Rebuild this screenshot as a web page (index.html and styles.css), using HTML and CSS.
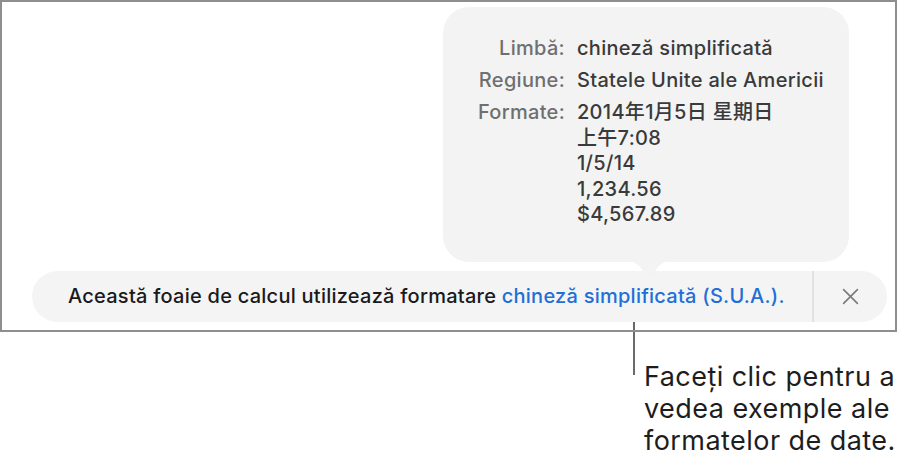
FILE: index.html
```html
<!DOCTYPE html>
<html lang="ro">

<head>
    <meta charset="UTF-8">
    <meta name="viewport" content="width=device-width, initial-scale=1.0">
    <title>Formatare</title>
    <link rel="stylesheet" href="styles.css">
</head>

<body>
    <div class="sheet-frame">
        <!-- popover with the locale details -->
        <div class="locale-popover">
            <div class="locale-grid">
                <div class="locale-label">Limbă:</div>
                <div class="locale-value">chineză simplificată</div>
                <div class="locale-label">Regiune:</div>
                <div class="locale-value">Statele Unite ale Americii</div>
                <div class="locale-label">Formate:</div>
                <div class="locale-value">
                    2014年1月5日 星期日<br>
                    上午7:08<br>
                    1/5/14<br>
                    1,234.56<br>
                    $4,567.89
                </div>
            </div>
            <svg class="popover-arrow" width="48" height="19" viewBox="0 0 48 19">
                <path d="M0 0 C10 0 14 3 19 12 C21.5 17 26.5 17 29 12 C34 3 38 0 48 0 Z" fill="#f3f3f3" />
            </svg>
        </div>

        <div class="format-banner">
            <p class="banner-text">Această foaie de calcul utilizează formatare <a href="#" class="banner-link">chineză simplificată (S.U.A.).</a></p>
            <button class="banner-close" type="button" aria-label="Închide">
                <svg width="17" height="17" viewBox="0 0 16 16">
                    <path d="M1.5 1.5 L14.5 14.5 M14.5 1.5 L1.5 14.5" stroke="#7a7a7a" stroke-width="1.5" stroke-linecap="round" fill="none" />
                </svg>
            </button>
        </div>
    </div>

    <div class="callout">
        <div class="callout-line"></div>
        <p class="callout-text">Faceți clic pentru a<br>vedea exemple ale<br>formatelor de date.</p>
    </div>
</body>

</html>
```

FILE: styles.css
```css
body {
    margin: 0;
    background: white;
    font-family: Inter, "Noto Sans CJK SC", sans-serif;
    color: #1d1d1d;
}

.sheet-frame {
    position: relative;
    width: 897px;
    height: 332px;
    box-sizing: border-box;
    border: 2px solid #8e8e8e;
    display: flex;
    flex-direction: column;
    justify-content: flex-end;
    padding: 0 8px 8px 30px;
}

/* popover */

.locale-popover {
    position: absolute;
    left: 441px;
    top: 5px;
    width: 406px;
    height: 255px;
    box-sizing: border-box;
    background: #f3f3f3;
    border-radius: 26px;
    padding: 29px 0 0 0;
}

.locale-grid {
    display: grid;
    grid-template-columns: 122px auto;
    column-gap: 12px;
    row-gap: 6.5px;
    font-size: 20px;
    font-weight: 500;
    letter-spacing: 0.3px;
    line-height: 25.5px;
}

.locale-label {
    text-align: right;
    color: #6f6f6f;
}

.locale-value {
    color: #3a3a3a;
}

.popover-arrow {
    position: absolute;
    left: 182px;
    bottom: -18px;
}

/* banner */

.format-banner {
    display: flex;
    align-items: stretch;
    height: 51px;
    background: #f4f4f4;
    border-radius: 26px;
}

.banner-text {
    flex: 1;
    margin: 0;
    padding-left: 36px;
    font-size: 20px;
    font-weight: 500;
    letter-spacing: 0.25px;
    line-height: 51px;
    color: #1a1a1a;
    white-space: nowrap;
}

.banner-link {
    color: #1f6fd6;
    text-decoration: none;
}

.banner-close {
    width: 75px;
    border: none;
    border-left: 2px solid #e2e2e2;
    background: none;
    display: flex;
    align-items: center;
    justify-content: center;
    padding: 0;
    cursor: pointer;
}

/* callout under the sheet */

.callout {
    display: flex;
    align-items: flex-start;
    padding-left: 633px;
}

.callout-line {
    width: 2px;
    height: 53px;
    background: #6a6a6a;
    margin-top: -10px;
}

.callout-text {
    margin: 29px 0 0 9px;
    font-size: 27px;
    letter-spacing: 0.45px;
    line-height: 32px;
    color: #1d1d1d;
    white-space: nowrap;
}
```
